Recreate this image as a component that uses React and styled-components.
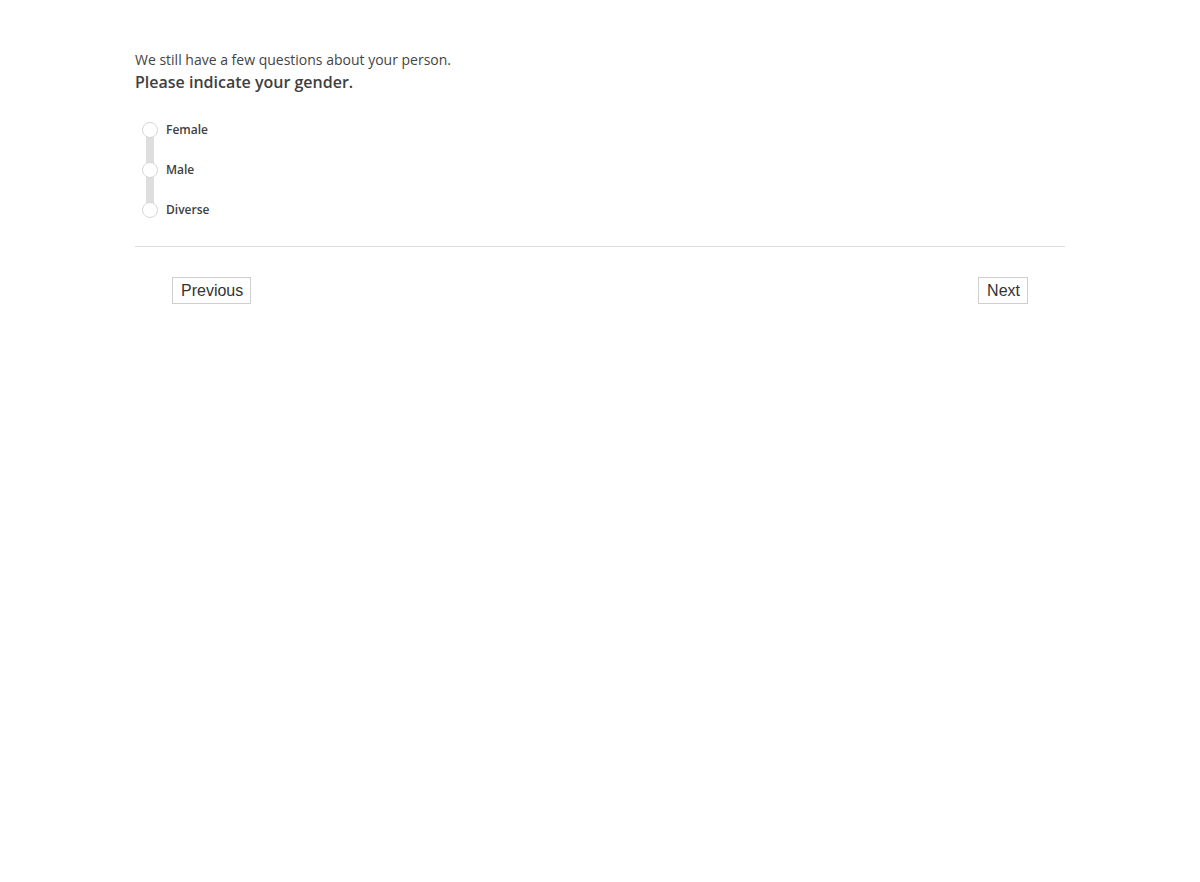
import React from 'react';
import styled, { createGlobalStyle } from 'styled-components';

const GlobalStyle = createGlobalStyle`
  html, body {
    margin: 0;
    padding: 0;
    background: #fff;
  }
  body {
    font-family: "Open Sans", "Liberation Sans", sans-serif;
    color: #404040;
  }
`;

const Wrapper = styled.div`
  width: 930px;
  margin: 0 auto;
  padding-top: 50px;
`;

const Intro = styled.p`
  margin: 0;
  font-size: 14px;
  line-height: 20px;
  color: #444;
`;

const Question = styled.h2`
  margin: 1px 0 0;
  font-size: 16px;
  line-height: 22px;
  font-weight: 600;
  color: #404040;
`;

const RadioGroup = styled.div`
  position: relative;
  display: flex;
  flex-direction: column;
  gap: 24px;
  margin-top: 29px;
  padding-left: 7px;

  &::before {
    content: '';
    position: absolute;
    left: 11px;
    top: 8px;
    bottom: 8px;
    width: 8px;
    background: #dedede;
  }
`;

const Option = styled.label`
  position: relative;
  display: flex;
  align-items: center;
  gap: 8px;
  height: 16px;
  cursor: pointer;
`;

const Circle = styled.span`
  width: 14px;
  height: 14px;
  border-radius: 50%;
  border: 1px solid #d6d6d6;
  background: #fff;
  flex-shrink: 0;
`;

const OptionText = styled.span`
  font-size: 12px;
  font-weight: 600;
  color: #404040;
  line-height: 16px;
`;

const Divider = styled.hr`
  margin: 28px 0 0;
  border: none;
  border-top: 1px solid #dcdcdc;
`;

const Nav = styled.div`
  display: flex;
  justify-content: space-between;
  padding: 30px 37px 0 37px;
`;

const NavButton = styled.button`
  font-family: "Liberation Sans", Arial, sans-serif;
  font-size: 16px;
  line-height: 18px;
  padding: 4px 7px 3px 8px;
  color: #333;
  background: #fff;
  border: 1px solid #cfcfcf;
  border-radius: 0;
  cursor: pointer;
`;

const options = ['Female', 'Male', 'Diverse'];

const App = () => (
  <>
    <GlobalStyle />
    <Wrapper>
      <Intro>We still have a few questions about your person.</Intro>
      <Question>Please indicate your gender.</Question>
      <RadioGroup>
        {options.map(option => (
          <Option key={option}>
            <Circle />
            <OptionText>{option}</OptionText>
          </Option>
        ))}
      </RadioGroup>
      <Divider />
      <Nav>
        <NavButton>Previous</NavButton>
        <NavButton>Next</NavButton>
      </Nav>
    </Wrapper>
  </>
);

export default App;
